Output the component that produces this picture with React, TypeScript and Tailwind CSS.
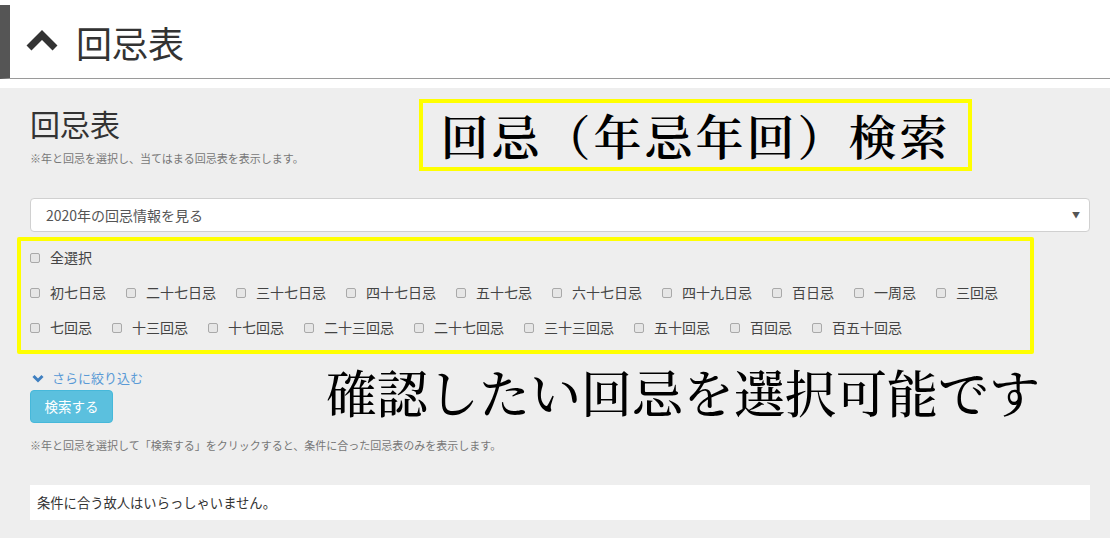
import React from 'react'

const rowA = ['初七日忌', '二十七日忌', '三十七日忌', '四十七日忌', '五十七忌', '六十七日忌', '四十九日忌', '百日忌', '一周忌', '三回忌']
const rowB = ['七回忌', '十三回忌', '十七回忌', '二十三回忌', '二十七回忌', '三十三回忌', '五十回忌', '百回忌', '百五十回忌']

function Check({ label }: { label: string }) {
  return (
    <label className="flex items-center mr-[20px] shrink-0">
      <span className="w-[10px] h-[10px] rounded-[2px] border border-[#a9a9a9] bg-[#e6e6e6] mr-[10px]" />
      <span className="text-[14px] text-[#444]">{label}</span>
    </label>
  )
}

export default function App() {
  return (
    <div
      className="relative w-[1110px] h-[538px] overflow-hidden bg-white"
      style={{ fontFamily: '"Noto Sans CJK JP", "Noto Sans", sans-serif' }}
    >
      {/* Header */}
      <header className="mt-[5px] h-[74px] flex items-center border-l-[10px] border-l-[#555] border-b border-b-[#9a9a9a]">
        <svg className="ml-[15px] mr-[17px] -mt-[4px]" width="34" height="24" viewBox="0 0 34 24">
          <path d="M4 20 L17 7 L30 20" fill="none" stroke="#333" strokeWidth="7" strokeLinejoin="miter" />
        </svg>
        <h1 className="text-[36px] leading-none text-[#333]">回忌表</h1>
      </header>

      {/* Body */}
      <main className="mt-[9px] bg-[#eeeeee] h-[460px] pl-[30px] pr-[20px] pt-[17px]">
        <h2 className="text-[30px] leading-[36px] text-[#333]">回忌表</h2>
        <p className="mt-[9px] text-[11px] leading-[16px] text-[#777]">※年と回忌を選択し、当てはまる回忌表を表示します。</p>

        <div className="mt-[32px] h-[34px] bg-white border border-[#d0d0d0] rounded-[4px] flex items-center justify-between pl-[15px] pr-[9px]">
          <span className="text-[14px] text-[#555]">2020年の回忌情報を見る</span>
          <span className="text-[8px] text-[#555]">▼</span>
        </div>

        <div className="mt-[8px]">
          <div className="h-[35px] flex items-center">
            <Check label="全選択" />
          </div>
          <div className="h-[35px] flex items-center">
            {rowA.map(l => <Check key={l} label={l} />)}
          </div>
          <div className="h-[35px] flex items-center">
            {rowB.map(l => <Check key={l} label={l} />)}
          </div>
        </div>

        <div className="mt-[23px] h-[20px] flex items-center">
          <svg className="ml-[2px] mr-[8px]" width="12" height="9" viewBox="0 0 12 9">
            <path d="M1.5 2 L6 6.5 L10.5 2" fill="none" stroke="#3f7fc0" strokeWidth="3" />
          </svg>
          <span className="text-[13px] text-[#5a9ad6]">さらに絞り込む</span>
        </div>

        <button className="mt-[2px] w-[83px] h-[33px] bg-[#5bc0de] border border-[#46b8da] rounded-[4px] text-white text-[13.5px]">
          検索する
        </button>

        <p className="mt-[15px] text-[11px] leading-[14px] text-[#777]">
          ※年と回忌を選択して「検索する」をクリックすると、条件に合った回忌表のみを表示します。
        </p>

        <div className="mt-[33px] h-[35px] bg-white flex items-center pl-[7px]">
          <span className="text-[13.3px] text-[#333]">条件に合う故人はいらっしゃいません。</span>
        </div>
      </main>

      {/* Annotations */}
      <div
        className="absolute left-[419px] top-[99px] w-[553px] h-[72px] border-[4px] border-[#ffff00] flex items-center justify-center text-[48px] tracking-[3px] text-black font-semibold"
        style={{ fontFamily: '"Noto Serif CJK JP", "Noto Sans CJK JP", serif' }}
      >
        回忌（年忌年回）検索
      </div>
      <div className="absolute left-[17px] top-[237px] w-[1017px] h-[117px] border-[4px] border-[#ffff00] rounded-[2px]" />
      <div
        className="absolute left-[326px] top-[360px] text-[51px] leading-[62px] text-black font-medium whitespace-nowrap"
        style={{ fontFamily: '"Noto Serif CJK JP", "Noto Sans CJK JP", serif' }}
      >
        確認したい回忌を選択可能です
      </div>
    </div>
  )
}
